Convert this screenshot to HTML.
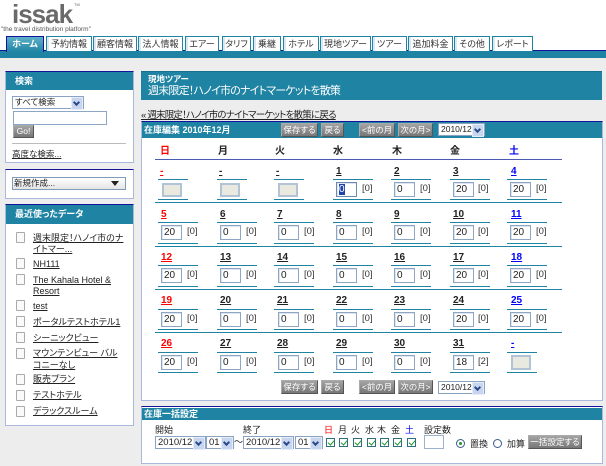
<!DOCTYPE html>
<html lang="ja"><head><meta charset="utf-8"><title>issak</title>
<style>
html,body{margin:0;padding:0}
body{width:606px;height:466px;overflow:hidden;position:relative;background:#ededed;font:9px/12px "Liberation Sans","Noto Sans CJK JP",sans-serif;font-feature-settings:"palt";color:#222}
div,span{position:absolute;box-sizing:border-box;white-space:nowrap}
.a{background:#fff;border:1px solid #a9b8dc}
.h{background:#1f84a3}
.w{color:#fff;font-weight:bold}
.tab{top:36px;height:15px;background:#fff;border:1px solid #1f84a3;border-bottom:0;box-shadow:inset 2px 0 0 #dce8ee;text-align:center;line-height:14px;font-size:9px;color:#333}
.btn{background:linear-gradient(#a4a4a4,#777);border:1px solid #666;border-color:#aaa #555 #555 #aaa;color:#fff;text-align:center;height:14px;line-height:12px;font-size:8.5px}
.sel{background:#fff;border:1px solid #8aa3c0;height:14px;line-height:12px;padding-left:2px;font-size:9.5px;color:#222}
.sm{font-size:8.5px}
.sel i{position:absolute;right:0;top:0;width:10px;height:12px;background:#c7d5ee;border:1px solid #e6edf8}
.sel i:after{content:"";position:absolute;left:2px;top:2px;width:3px;height:3px;border:solid #2a4a8a;border-width:0 2px 2px 0;transform:rotate(45deg)}
.l{height:1px;background:#1f84a3}
.n{font-weight:bold;text-decoration:underline;color:#222;font-size:10px}
.r{color:#f00}.u{color:#00f}
.i{height:15px;width:21px;background:#fff;border:1px solid #8ca6c4;box-shadow:inset 1px 1px 0 #dde6ef;padding-left:2px;line-height:13px;font-size:10px;color:#222}
.g{height:14px;width:20px;background:#e9e9e0;border:2px solid #b3c3d6}
.k{color:#333;font-size:9.5px}
.c{width:9px;height:9px;background:#fff;border:1px solid #2e6e7e;top:438px}
.c:after{content:"";position:absolute;left:2px;top:0;width:3px;height:5px;border:solid #1a9a2a;border-width:0 1.5px 1.5px 0;transform:rotate(40deg)}
.d{top:424px;font-size:9px;color:#222}
.li{left:33px;color:#222;text-decoration:underline;font-size:9px}
.doc{left:16px;width:9px;height:11px;border:1px solid #aaa;border-radius:1px;background:#fafafa}
</style></head><body>

<div style="left:0;top:0;width:606px;height:51px;background:#fff"></div>
<div style="left:12px;top:-1px;font-size:26px;line-height:30px;font-weight:bold;color:#6a6a6a;letter-spacing:-1px">issak</div>
<div style="left:74px;top:2px;font-size:4px;line-height:5px;color:#666">TM</div>
<div style="left:1px;top:26px;font-size:6.5px;line-height:8px;color:#555">"the travel distribution platform"</div>

<div style="left:0;top:50px;width:606px;height:8px;background:#1f84a3;border-top:1px solid #14149a"></div>
<div class="tab w" style="left:6px;width:38px;height:16px;background:linear-gradient(#5fb0c8,#1f84a3);border:1px solid #14149a;border-bottom:0;color:#fff;box-shadow:none">ホーム</div>
<div class="tab" style="left:46px;width:46px">予約情報</div>
<div class="tab" style="left:93px;width:44px">顧客情報</div>
<div class="tab" style="left:138px;width:45px">法人情報</div>
<div class="tab" style="left:185px;width:34px">エアー</div>
<div class="tab" style="left:222px;width:29px">タリフ</div>
<div class="tab" style="left:253px;width:28px">乗継</div>
<div class="tab" style="left:283px;width:36px">ホテル</div>
<div class="tab" style="left:320px;width:51px">現地ツアー</div>
<div class="tab" style="left:372px;width:35px">ツアー</div>
<div class="tab" style="left:408px;width:45px">追加料金</div>
<div class="tab" style="left:454px;width:36px">その他</div>
<div class="tab" style="left:492px;width:41px">レポート</div>

<!-- left -->
<div class="a" style="left:5px;top:71px;width:129px;height:92px;border-top:1px solid #14149a"></div>
<div class="h w" style="left:6px;top:72px;width:127px;height:18px;padding-left:9px;line-height:18px">検索</div>
<div class="sel" style="left:12px;top:96px;width:72px;height:13px;line-height:11px;font-size:8.5px">すべて検索<i style="height:11px"></i></div>
<div style="left:13px;top:111px;width:94px;height:14px;background:#fff;border:1px solid #8ca6c4"></div>
<div class="btn" style="left:13px;top:125px;width:21px;height:13px;line-height:11px">Go!</div>
<div style="left:12px;top:143px;width:114px;height:1px;background:#bbb"></div>
<div class="li" style="left:12px;top:148px;font-size:8.5px">高度な検索...</div>

<div class="a" style="left:5px;top:169px;width:129px;height:30px;border-top:1px solid #14149a"></div>
<div style="left:12px;top:177px;width:114px;height:13px;background:linear-gradient(#fff,#e4e4e4);border:1px solid #7f9db9;padding-left:1px;line-height:11px;font-size:8.5px">新規作成...</div>
<div style="left:111px;top:181px;width:0;height:0;border:4px solid transparent;border-top:5px solid #222;border-bottom:0"></div>

<div class="a" style="left:5px;top:204px;width:129px;height:222px;border-top:1px solid #14149a"></div>
<div class="h w" style="left:6px;top:205px;width:127px;height:19px;padding-left:9px;line-height:19px">最近使ったデータ</div>
<div class="doc" style="top:232px"></div><div class="li" style="top:232px">週末限定！ハノイ市のナ</div><div class="li" style="top:243px">イトマー...</div>
<div class="doc" style="top:258px"></div><div class="li" style="top:258px">NH111</div>
<div class="doc" style="top:274px"></div><div class="li" style="top:274px">The Kahala Hotel &amp;</div><div class="li" style="top:285px">Resort</div>
<div class="doc" style="top:300px"></div><div class="li" style="top:300px">test</div>
<div class="doc" style="top:316px"></div><div class="li" style="top:316px">ポータルテストホテル1</div>
<div class="doc" style="top:332px"></div><div class="li" style="top:332px">シーニックビュー</div>
<div class="doc" style="top:348px"></div><div class="li" style="top:347px">マウンテンビュー バル</div><div class="li" style="top:359px">コニーなし</div>
<div class="doc" style="top:374px"></div><div class="li" style="top:373px">販売プラン</div>
<div class="doc" style="top:390px"></div><div class="li" style="top:389px">テストホテル</div>
<div class="doc" style="top:406px"></div><div class="li" style="top:405px">デラックスルーム</div>

<!-- title -->
<div class="h" style="left:141px;top:71px;width:461px;height:29px;border-top:1px solid #14708c"></div>
<div class="w" style="left:148px;top:73px;font-size:8.5px">現地ツアー</div>
<div style="left:148px;top:84px;font-size:11px;line-height:14px;color:#fff;letter-spacing:-.8px">週末限定！ハノイ市のナイトマーケットを散策</div>
<div style="left:141px;top:110px;font-size:9.5px;text-decoration:underline;letter-spacing:-.8px">« 週末限定！ハノイ市のナイトマーケットを散策に戻る</div>

<!-- calendar -->
<div class="a" style="left:141px;top:121px;width:462px;height:280px;border-top:1px solid #14149a"></div>
<div class="h w" style="left:142px;top:122px;width:460px;height:16px;padding-left:2px;line-height:16px">在庫編集 2010年12月</div>
<div class="btn" style="left:281px;top:123px;width:37px">保存する</div>
<div class="btn" style="left:321px;top:123px;width:23px">戻る</div>
<div class="btn" style="left:359px;top:123px;width:36px">&lt;前の月</div>
<div class="btn" style="left:398px;top:123px;width:35px">次の月&gt;</div>
<div class="sel sm" style="left:438px;top:123px;width:47px;height:13px;line-height:11px">2010/12<i style="height:11px"></i></div>

<div class="n r" style="left:160px;top:146px;text-decoration:none">日</div>
<div class="n" style="left:218px;top:146px;text-decoration:none">月</div>
<div class="n" style="left:275px;top:146px;text-decoration:none">火</div>
<div class="n" style="left:333px;top:146px;text-decoration:none">水</div>
<div class="n" style="left:392px;top:146px;text-decoration:none">木</div>
<div class="n" style="left:450px;top:146px;text-decoration:none">金</div>
<div class="n u" style="left:509px;top:146px;text-decoration:none">土</div>
<div style="left:155px;top:159px;width:407px;height:1px;background:#4a5cb0"></div>
<div class="l" style="left:155px;top:202px;width:407px"></div>
<div class="l" style="left:155px;top:246px;width:407px"></div>
<div class="l" style="left:155px;top:289px;width:407px"></div>
<div class="l" style="left:155px;top:332px;width:407px"></div>

<!-- row 1 -->
<div class="n r" style="left:160px;top:166px">-</div><div class="l" style="left:158px;top:179px;width:30px"></div><div class="g" style="left:162px;top:183px"></div><div class="l" style="left:158px;top:199px;width:30px"></div>
<div class="n" style="left:219px;top:166px">-</div><div class="l" style="left:217px;top:179px;width:30px"></div><div class="g" style="left:220px;top:183px"></div><div class="l" style="left:217px;top:199px;width:30px"></div>
<div class="n" style="left:276px;top:166px">-</div><div class="l" style="left:274px;top:179px;width:30px"></div><div class="g" style="left:278px;top:183px"></div><div class="l" style="left:274px;top:199px;width:30px"></div>
<div class="n" style="left:336px;top:166px">1</div><div class="l" style="left:333px;top:179px;width:40px"></div><div class="i" style="left:336px;top:182px;border-color:#6a8ab0"><span style="left:2px;top:1px;width:6px;height:11px;background:#2244aa;color:#fff;line-height:11px">0</span></div><div class="k" style="left:362px;top:183px">[0]</div><div class="l" style="left:333px;top:199px;width:40px"></div>
<div class="n" style="left:394px;top:166px">2</div><div class="l" style="left:391px;top:179px;width:40px"></div><div class="i" style="left:394px;top:182px">0</div><div class="k" style="left:420px;top:183px">[0]</div><div class="l" style="left:391px;top:199px;width:40px"></div>
<div class="n" style="left:453px;top:166px">3</div><div class="l" style="left:450px;top:179px;width:40px"></div><div class="i" style="left:453px;top:182px">20</div><div class="k" style="left:478px;top:183px">[0]</div><div class="l" style="left:450px;top:199px;width:40px"></div>
<div class="n u" style="left:511px;top:166px">4</div><div class="l" style="left:507px;top:179px;width:40px"></div><div class="i" style="left:510px;top:182px">20</div><div class="k" style="left:536px;top:183px">[0]</div><div class="l" style="left:507px;top:199px;width:40px"></div>

<!-- row 2 -->
<div class="n r" style="left:161px;top:209px">5</div><div class="l" style="left:158px;top:222px;width:40px"></div><div class="i" style="left:161px;top:225px">20</div><div class="k" style="left:187px;top:226px">[0]</div><div class="l" style="left:158px;top:243px;width:40px"></div>
<div class="n" style="left:220px;top:209px">6</div><div class="l" style="left:217px;top:222px;width:40px"></div><div class="i" style="left:220px;top:225px">0</div><div class="k" style="left:246px;top:226px">[0]</div><div class="l" style="left:217px;top:243px;width:40px"></div>
<div class="n" style="left:277px;top:209px">7</div><div class="l" style="left:274px;top:222px;width:40px"></div><div class="i" style="left:278px;top:225px">0</div><div class="k" style="left:304px;top:226px">[0]</div><div class="l" style="left:274px;top:243px;width:40px"></div>
<div class="n" style="left:336px;top:209px">8</div><div class="l" style="left:333px;top:222px;width:40px"></div><div class="i" style="left:336px;top:225px">0</div><div class="k" style="left:362px;top:226px">[0]</div><div class="l" style="left:333px;top:243px;width:40px"></div>
<div class="n" style="left:394px;top:209px">9</div><div class="l" style="left:391px;top:222px;width:40px"></div><div class="i" style="left:394px;top:225px">0</div><div class="k" style="left:420px;top:226px">[0]</div><div class="l" style="left:391px;top:243px;width:40px"></div>
<div class="n" style="left:453px;top:209px">10</div><div class="l" style="left:450px;top:222px;width:40px"></div><div class="i" style="left:453px;top:225px">20</div><div class="k" style="left:478px;top:226px">[0]</div><div class="l" style="left:450px;top:243px;width:40px"></div>
<div class="n u" style="left:511px;top:209px">11</div><div class="l" style="left:507px;top:222px;width:40px"></div><div class="i" style="left:510px;top:225px">20</div><div class="k" style="left:536px;top:226px">[0]</div><div class="l" style="left:507px;top:243px;width:40px"></div>

<!-- row 3 -->
<div class="n r" style="left:161px;top:252px">12</div><div class="l" style="left:158px;top:265px;width:40px"></div><div class="i" style="left:161px;top:268px">20</div><div class="k" style="left:187px;top:269px">[0]</div><div class="l" style="left:158px;top:286px;width:40px"></div>
<div class="n" style="left:220px;top:252px">13</div><div class="l" style="left:217px;top:265px;width:40px"></div><div class="i" style="left:220px;top:268px">0</div><div class="k" style="left:246px;top:269px">[0]</div><div class="l" style="left:217px;top:286px;width:40px"></div>
<div class="n" style="left:277px;top:252px">14</div><div class="l" style="left:274px;top:265px;width:40px"></div><div class="i" style="left:278px;top:268px">0</div><div class="k" style="left:304px;top:269px">[0]</div><div class="l" style="left:274px;top:286px;width:40px"></div>
<div class="n" style="left:336px;top:252px">15</div><div class="l" style="left:333px;top:265px;width:40px"></div><div class="i" style="left:336px;top:268px">0</div><div class="k" style="left:362px;top:269px">[0]</div><div class="l" style="left:333px;top:286px;width:40px"></div>
<div class="n" style="left:394px;top:252px">16</div><div class="l" style="left:391px;top:265px;width:40px"></div><div class="i" style="left:394px;top:268px">0</div><div class="k" style="left:420px;top:269px">[0]</div><div class="l" style="left:391px;top:286px;width:40px"></div>
<div class="n" style="left:453px;top:252px">17</div><div class="l" style="left:450px;top:265px;width:40px"></div><div class="i" style="left:453px;top:268px">20</div><div class="k" style="left:478px;top:269px">[0]</div><div class="l" style="left:450px;top:286px;width:40px"></div>
<div class="n u" style="left:511px;top:252px">18</div><div class="l" style="left:507px;top:265px;width:40px"></div><div class="i" style="left:510px;top:268px">20</div><div class="k" style="left:536px;top:269px">[0]</div><div class="l" style="left:507px;top:286px;width:40px"></div>

<!-- row 4 -->
<div class="n r" style="left:161px;top:295px">19</div><div class="l" style="left:158px;top:309px;width:40px"></div><div class="i" style="left:161px;top:312px">20</div><div class="k" style="left:187px;top:313px">[0]</div><div class="l" style="left:158px;top:329px;width:40px"></div>
<div class="n" style="left:220px;top:295px">20</div><div class="l" style="left:217px;top:309px;width:40px"></div><div class="i" style="left:220px;top:312px">0</div><div class="k" style="left:246px;top:313px">[0]</div><div class="l" style="left:217px;top:329px;width:40px"></div>
<div class="n" style="left:277px;top:295px">21</div><div class="l" style="left:274px;top:309px;width:40px"></div><div class="i" style="left:278px;top:312px">0</div><div class="k" style="left:304px;top:313px">[0]</div><div class="l" style="left:274px;top:329px;width:40px"></div>
<div class="n" style="left:336px;top:295px">22</div><div class="l" style="left:333px;top:309px;width:40px"></div><div class="i" style="left:336px;top:312px">0</div><div class="k" style="left:362px;top:313px">[0]</div><div class="l" style="left:333px;top:329px;width:40px"></div>
<div class="n" style="left:394px;top:295px">23</div><div class="l" style="left:391px;top:309px;width:40px"></div><div class="i" style="left:394px;top:312px">0</div><div class="k" style="left:420px;top:313px">[0]</div><div class="l" style="left:391px;top:329px;width:40px"></div>
<div class="n" style="left:453px;top:295px">24</div><div class="l" style="left:450px;top:309px;width:40px"></div><div class="i" style="left:453px;top:312px">20</div><div class="k" style="left:478px;top:313px">[0]</div><div class="l" style="left:450px;top:329px;width:40px"></div>
<div class="n u" style="left:511px;top:295px">25</div><div class="l" style="left:507px;top:309px;width:40px"></div><div class="i" style="left:510px;top:312px">20</div><div class="k" style="left:536px;top:313px">[0]</div><div class="l" style="left:507px;top:329px;width:40px"></div>

<!-- row 5 -->
<div class="n r" style="left:161px;top:338px">26</div><div class="l" style="left:158px;top:352px;width:40px"></div><div class="i" style="left:161px;top:355px">20</div><div class="k" style="left:187px;top:356px">[0]</div><div class="l" style="left:158px;top:372px;width:40px"></div>
<div class="n" style="left:220px;top:338px">27</div><div class="l" style="left:217px;top:352px;width:40px"></div><div class="i" style="left:220px;top:355px">0</div><div class="k" style="left:246px;top:356px">[0]</div><div class="l" style="left:217px;top:372px;width:40px"></div>
<div class="n" style="left:277px;top:338px">28</div><div class="l" style="left:274px;top:352px;width:40px"></div><div class="i" style="left:278px;top:355px">0</div><div class="k" style="left:304px;top:356px">[0]</div><div class="l" style="left:274px;top:372px;width:40px"></div>
<div class="n" style="left:336px;top:338px">29</div><div class="l" style="left:333px;top:352px;width:40px"></div><div class="i" style="left:336px;top:355px">0</div><div class="k" style="left:362px;top:356px">[0]</div><div class="l" style="left:333px;top:372px;width:40px"></div>
<div class="n" style="left:394px;top:338px">30</div><div class="l" style="left:391px;top:352px;width:40px"></div><div class="i" style="left:394px;top:355px">0</div><div class="k" style="left:420px;top:356px">[0]</div><div class="l" style="left:391px;top:372px;width:40px"></div>
<div class="n" style="left:453px;top:338px">31</div><div class="l" style="left:450px;top:352px;width:40px"></div><div class="i" style="left:453px;top:355px">18</div><div class="k" style="left:478px;top:356px">[2]</div><div class="l" style="left:450px;top:372px;width:40px"></div>
<div class="n u" style="left:511px;top:338px">-</div><div class="l" style="left:507px;top:352px;width:30px"></div><div class="g" style="left:511px;top:355px;height:15px"></div><div class="l" style="left:507px;top:372px;width:30px"></div>

<div class="btn" style="left:281px;top:380px;width:37px">保存する</div>
<div class="btn" style="left:321px;top:380px;width:23px">戻る</div>
<div class="btn" style="left:359px;top:380px;width:36px">&lt;前の月</div>
<div class="btn" style="left:398px;top:380px;width:35px">次の月&gt;</div>
<div class="sel sm" style="left:438px;top:381px;width:47px;height:13px;line-height:11px">2010/12<i style="height:11px"></i></div>

<!-- bulk -->
<div class="a" style="left:141px;top:406px;width:462px;height:58px;border-top:1px solid #14149a"></div>
<div class="h w" style="left:142px;top:408px;width:460px;height:12px;padding-left:2px;line-height:12px;border-top:0">在庫一括設定</div>
<div class="d" style="left:155px">開始</div>
<div class="d" style="left:243px">終了</div>
<div class="sel" style="left:155px;top:436px;width:51px;height:13px;line-height:11px">2010/12<i style="height:11px"></i></div>
<div class="sel" style="left:206px;top:436px;width:28px;height:13px;line-height:11px">01<i style="height:11px"></i></div>
<div class="d" style="left:234px;top:436px">～</div>
<div class="sel" style="left:243px;top:436px;width:51px;height:13px;line-height:11px">2010/12<i style="height:11px"></i></div>
<div class="sel" style="left:295px;top:436px;width:28px;height:13px;line-height:11px">01<i style="height:11px"></i></div>
<div class="d r" style="left:324px;color:#f00">日</div>
<div class="d" style="left:338px">月</div>
<div class="d" style="left:351px">火</div>
<div class="d" style="left:365px">水</div>
<div class="d" style="left:377px">木</div>
<div class="d" style="left:391px">金</div>
<div class="d" style="left:405px;color:#00f">土</div>
<div class="c" style="left:326px"></div><div class="c" style="left:339px"></div><div class="c" style="left:353px"></div><div class="c" style="left:367px"></div><div class="c" style="left:380px"></div><div class="c" style="left:393px"></div><div class="c" style="left:407px"></div>
<div class="d" style="left:424px">設定数</div>
<div style="left:424px;top:435px;width:20px;height:14px;background:#fff;border:1px solid #9cb2cc"></div>
<div style="left:456px;top:439px;width:9px;height:9px;border-radius:50%;background:#fff;border:1px solid #3a5a8a"></div>
<div style="left:459px;top:442px;width:3px;height:3px;border-radius:50%;background:#1a9a2a"></div>
<div class="d" style="left:470px;top:438px">置換</div>
<div style="left:493px;top:439px;width:9px;height:9px;border-radius:50%;background:#fff;border:1px solid #3a5a8a"></div>
<div class="d" style="left:507px;top:438px">加算</div>
<div class="btn" style="left:528px;top:435px;width:54px;height:14px">一括設定する</div>
</body></html>
